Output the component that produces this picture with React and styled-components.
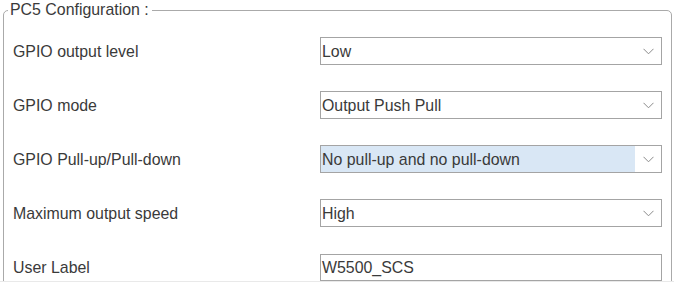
import React from "react";
import styled, { createGlobalStyle } from "styled-components";

const Global = createGlobalStyle`
  html, body {
    margin: 0;
    padding: 0;
    background: #ffffff;
  }
  body {
    font-family: "Liberation Sans", Arial, sans-serif;
    color: #3a3a3a;
  }
`;

const Viewport = styled.div`
  width: 674px;
  height: 281px;
  overflow: hidden;
  border-bottom: 1px solid #e9e9e9;
`;

const Frame = styled.fieldset`
  margin: 0 2px 0 3px;
  padding: 4px 8px 40px 9px;
  border: 1px solid #aaaaaa;
  border-radius: 5px;
  min-width: 0;
`;

const Title = styled.legend`
  margin-left: -5px;
  padding: 0 3px 0 2px;
  font-size: 15.9px;
  line-height: 20px;
  color: #3a3a3a;
`;

const Row = styled.div`
  display: grid;
  grid-template-columns: 307px 342px;
  align-items: center;
  height: 54px;
`;

const Label = styled.span`
  font-size: 15.9px;
  line-height: 18px;
  padding-top: 2px;
  color: #3a3a3a;
`;

const Box = styled.div`
  box-sizing: border-box;
  display: flex;
  align-items: stretch;
  height: ${(p) => (p.$input ? "27px" : "28px")};
  border: 1px solid #a4a4a4;
  background: #ffffff;
`;

const Value = styled.div`
  flex: 1;
  display: flex;
  align-items: center;
  padding: 2px 0 0 1px;
  font-size: 15.9px;
  color: #3a3a3a;
  background: ${(p) => (p.$selected ? "#d9e7f5" : "#ffffff")};
`;

const Arrow = styled.div`
  width: 26px;
  display: flex;
  align-items: center;
  justify-content: center;
  background: #ffffff;
`;

function Chevron() {
  return (
    <svg width="11" height="7" viewBox="0 0 11 7">
      <path d="M0.5 0.8 L5.5 5.8 L10.5 0.8" fill="none" stroke="#8a8a8a" strokeWidth="1" />
    </svg>
  );
}

const rows = [
  { label: "GPIO output level", value: "Low" },
  { label: "GPIO mode", value: "Output Push Pull" },
  { label: "GPIO Pull-up/Pull-down", value: "No pull-up and no pull-down", selected: true },
  { label: "Maximum output speed", value: "High" },
  { label: "User Label", value: "W5500_SCS", input: true },
];

export default function App() {
  return (
    <Viewport>
      <Global />
      <Frame>
        <Title>PC5 Configuration :</Title>
        {rows.map((r) => (
          <Row key={r.label}>
            <Label>{r.label}</Label>
            <Box $input={r.input}>
              <Value $selected={r.selected}>{r.value}</Value>
              {!r.input && (
                <Arrow>
                  <Chevron />
                </Arrow>
              )}
            </Box>
          </Row>
        ))}
      </Frame>
    </Viewport>
  );
}
